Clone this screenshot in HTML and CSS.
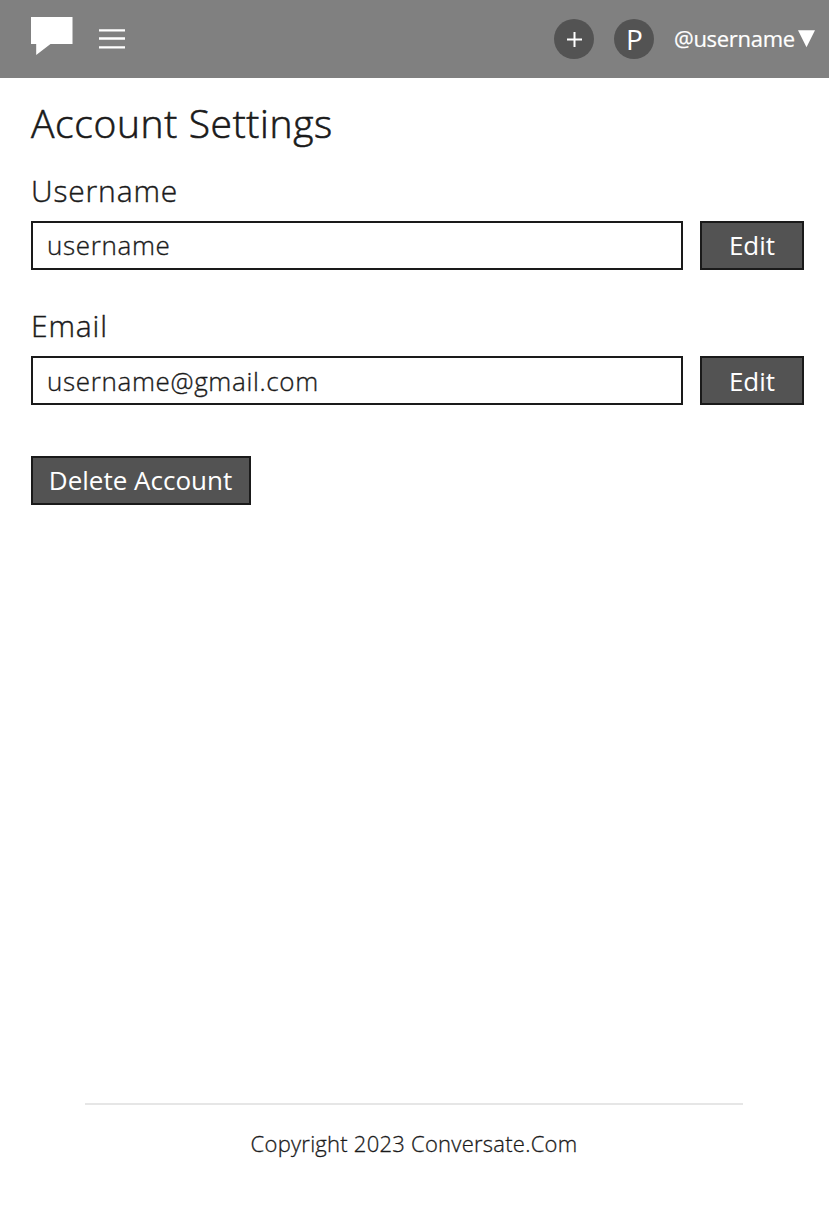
FILE: index.html
```html
<!DOCTYPE html>
<html lang="en">
<head>
<meta charset="utf-8">
<title>Account Settings</title>
<link rel="stylesheet" href="styles.css">
</head>
<body>
<header class="topbar">
  <svg class="logo" viewBox="0 0 42 40" width="42" height="40"><path d="M0 1H41.500V28H19.500L5.200 39V28H0Z" fill="#fff"/></svg>
  <svg class="menu" viewBox="0 0 26 20" width="26" height="20"><path d="M0 1.400H26M0 9.500H26M0 18.400H26" stroke="#fff" stroke-width="2.400"/></svg>
  <div class="actions">
    <span class="circle plus"><svg viewBox="0 0 15 15" width="15" height="15"><path d="M7.500 0V15M0 7.500H15" stroke="#fff" stroke-width="2"/></svg></span>
    <span class="circle"><span class="initial">P</span></span>
    <span class="user">@username</span>
    <svg class="caret" viewBox="0 0 17 18" width="17" height="18"><path d="M0 .2H17L8.500 17.200Z" fill="#fff"/></svg>
  </div>
</header>
<main class="content">
  <h1 class="title">Account Settings</h1>
  <section class="field">
    <h2 class="label">Username</h2>
    <div class="row"><div class="input">username</div><div class="button edit">Edit</div></div>
  </section>
  <section class="field">
    <h2 class="label">Email</h2>
    <div class="row email"><div class="input">username@gmail.com</div><div class="button edit">Edit</div></div>
  </section>
  <div class="button delete">Delete Account</div>
</main>
<footer class="footer">Copyright 2023 Conversate.Com</footer>
</body>
</html>
```

FILE: styles.css
```css
* { box-sizing: border-box; }
body {
  margin: 0;
  height: 1205px;
  display: flex;
  flex-direction: column;
  background: #fff;
  color: #1a1a1a;
  font-family: "Open Sans", sans-serif;
  font-weight: 300;
  white-space: nowrap;
}
svg { display: block; flex: none; }
.topbar {
  height: 78px;
  flex: none;
  display: flex;
  align-items: center;
  padding: 0 14px 0 31px;
  background: #808080;
  color: #fff;
  font-weight: 400;
}
.logo { margin-top: -6px; }
.menu { margin-left: 26px; }
.actions { display: flex; align-items: center; margin-left: auto; }
.circle {
  width: 40px;
  height: 40px;
  margin-right: 20px;
  display: flex;
  align-items: center;
  justify-content: center;
  border-radius: 50%;
  background: #535353;
}
.plus { padding-left: 1px; }
.initial { font-size: 28px; line-height: 36px; padding: 0 0 1px 1px; }
.user { width: 121px; margin-top: -2px; font-size: 22px; letter-spacing: -0.3px; -webkit-text-stroke: 0.2px #fff; }
.caret { margin-left: 3px; }
.content { flex: 1; padding: 24px 25px 0 31px; }
.title {
  margin: 0 0 25px;
  height: 44px;
  font-size: 39px;
  line-height: 42px;
  font-weight: 300;
  letter-spacing: 0.64px;
  -webkit-text-stroke: 0.6px #1a1a1a;
}
.label {
  margin: 0 0 10px;
  height: 40px;
  font-size: 30px;
  line-height: 40px;
  font-weight: 300;
  letter-spacing: 0.85px;
  -webkit-text-stroke: 0.4px #1a1a1a;
}
.field { height: 135.400px; }
.row { display: flex; gap: 17px; }
.input {
  flex: 1;
  height: 49px;
  padding-left: 14px;
  border: 2px solid #1a1a1a;
  font-size: 26px;
  line-height: 45px;
  letter-spacing: 0.66px;
  -webkit-text-stroke: 0.35px #1a1a1a;
}
.button {
  height: 49px;
  border: 2px solid #1a1a1a;
  background: #535353;
  color: #fff;
  font-size: 26px;
  font-weight: 400;
  line-height: 45px;
  text-align: center;
}
.email > * { line-height: 47px; }
.edit { width: 104px; }
.delete { width: 220px; margin-top: 14px; padding-right: 1px; }
.footer {
  width: 658px;
  height: 102px;
  margin: 0 86px 0 85px;
  padding-top: 23px;
  border-top: 2px solid #e6e6e6;
  font-size: 22px;
  line-height: 30px;
  letter-spacing: 0.25px;
  text-align: center;
  -webkit-text-stroke: 0.3px #1a1a1a;
}
```
